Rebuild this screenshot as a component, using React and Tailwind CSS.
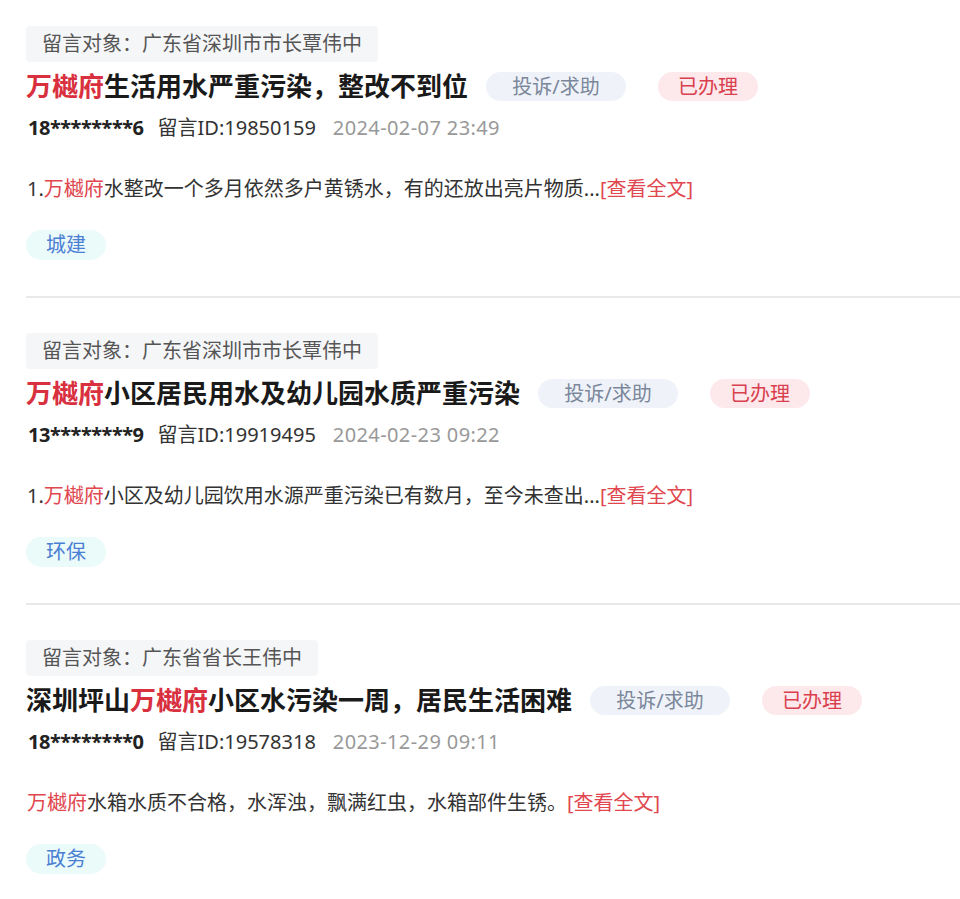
import React from "react";

const items = [
  {
    target: "留言对象：广东省深圳市市长覃伟中",
    title: [["万樾府", true], ["生活用水严重污染，整改不到位", false]],
    phone: "18********6",
    id: "19850159",
    date: "2024-02-07 23:49",
    body: [["1.", false], ["万樾府", true], ["水整改一个多月依然多户黄锈水，有的还放出亮片物质...", false]],
    tag: "城建",
  },
  {
    target: "留言对象：广东省深圳市市长覃伟中",
    title: [["万樾府", true], ["小区居民用水及幼儿园水质严重污染", false]],
    phone: "13********9",
    id: "19919495",
    date: "2024-02-23 09:22",
    body: [["1.", false], ["万樾府", true], ["小区及幼儿园饮用水源严重污染已有数月，至今未查出...", false]],
    tag: "环保",
  },
  {
    target: "留言对象：广东省省长王伟中",
    title: [["深圳坪山", false], ["万樾府", true], ["小区水污染一周，居民生活困难", false]],
    phone: "18********0",
    id: "19578318",
    date: "2023-12-29 09:11",
    body: [["万樾府", true], ["水箱水质不合格，水浑浊，飘满红虫，水箱部件生锈。", false]],
    tag: "政务",
  },
];

function Item({ it, first }) {
  return (
    <div className={(first ? "pt-[26px]" : "pt-[35px]") + " pb-[36px] border-b-2 border-[#e9e9e9]"}>
      <div className="inline-flex h-[36px] items-center rounded-[4px] bg-[#f5f6f8] px-4 text-[20px] leading-[36px] text-[#555]">
        {it.target}
      </div>
      <div className="mt-[4px] flex h-[40px] items-center">
        <div className="text-[26px] font-bold leading-[40px] text-[#1a1a1a]">
          {it.title.map(([t, red], i) => (
            <span key={i} className={red ? "text-[#d8303e]" : ""}>{t}</span>
          ))}
        </div>
        <div className="ml-[18px] flex h-[29px] w-[140px] items-center justify-center rounded-full bg-[#eff3f9] text-[20px] leading-[29px] text-[#7b879b]">
          投诉/求助
        </div>
        <div className="ml-[32px] flex h-[29px] w-[100px] items-center justify-center rounded-full bg-[#fde8ec] text-[20px] leading-[29px] text-[#d9404d]">
          已办理
        </div>
      </div>
      <div className="mt-[8px] flex h-[28px] items-center pl-[2px] text-[20px] leading-[28px]">
        <span className="font-bold tracking-[-0.5px] text-[#222]">{it.phone}</span>
        <span className="ml-[14px] text-[#333]">留言ID:{it.id}</span>
        <span className="ml-[17px] tracking-[0.4px] text-[#999]">{it.date}</span>
      </div>
      <div className="mt-[33px] h-[28px] pl-[1px] text-[20px] leading-[28px] text-[#333]">
        {it.body.map(([t, red], i) => (
          <span key={i} className={red ? "text-[#e0474f]" : ""}>{t}</span>
        ))}
        <span className="text-[#e0474f]">[查看全文]</span>
      </div>
      <div className="mt-[27px] flex h-[30px] w-[80px] items-center justify-center rounded-full bg-[#ebfbfa] text-[20px] leading-[30px] text-[#4b7fd3]">
        {it.tag}
      </div>
    </div>
  );
}

export default function App() {
  return (
    <div
      className="min-h-[899px] w-[960px] bg-white pl-[26px]"
      style={{ fontFamily: '"Noto Sans", "Noto Sans CJK SC", sans-serif' }}
    >
      {items.map((it, i) => (
        <Item key={i} it={it} first={i === 0} />
      ))}
    </div>
  );
}
